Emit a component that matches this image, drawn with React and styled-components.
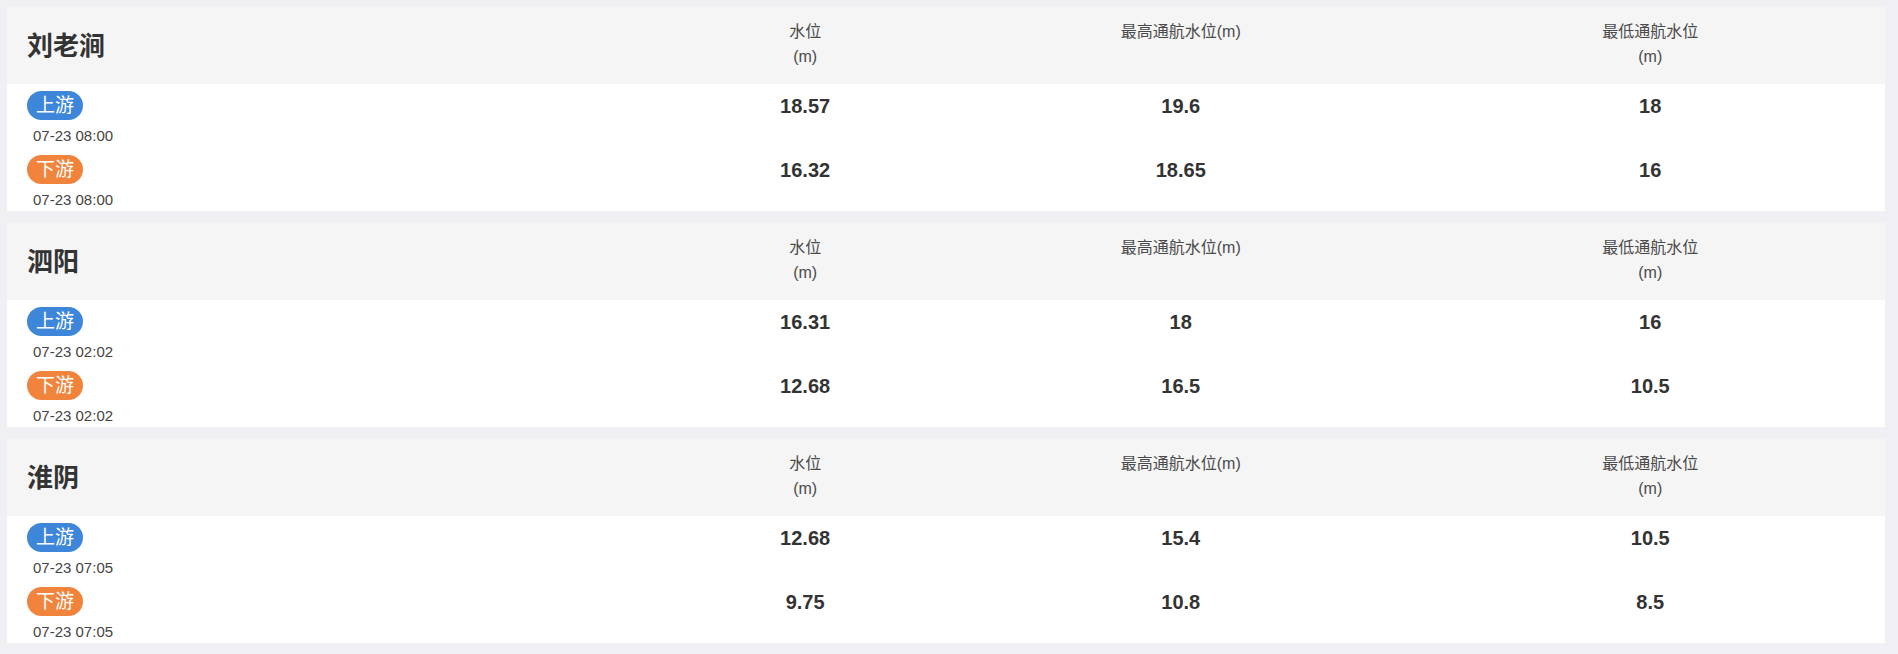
import React from "react";
import styled, { createGlobalStyle } from "styled-components";

const GlobalStyle = createGlobalStyle`
  html, body {
    margin: 0;
    padding: 0;
    background: #efeff4;
    font-family: "Liberation Sans", "Noto Sans CJK SC", sans-serif;
    color: #333;
  }
`;

const Page = styled.div`
  display: flex;
  flex-direction: column;
  gap: 12px;
  padding: 7px 13px 11px 7px;
`;

const Card = styled.section`
  background: #fff;
`;

const Grid = styled.div`
  display: grid;
  grid-template-columns: 35% 15% 25% 25%;
`;

const Header = styled(Grid)`
  background: #f5f5f6;
  height: 77px;
  box-sizing: border-box;
`;

const Title = styled.h2`
  margin: 0;
  align-self: center;
  padding-left: 20px;
  font-size: 26px;
  font-weight: bold;
  color: #333;
  line-height: 1;
`;

const ColHead = styled.div`
  align-self: start;
  padding-top: 12px;
  text-align: center;
  font-size: 16px;
  line-height: 25px;
  color: #4a4a4a;
`;

const Body = styled.div`
  display: flex;
  flex-direction: column;
  gap: 8px;
  padding: 7px 0 0;
`;

const Row = styled(Grid)``;

const Label = styled.div`
  display: flex;
  flex-direction: column;
  align-items: flex-start;
  padding-left: 20px;
`;

const Badge = styled.span`
  display: inline-block;
  height: 29px;
  line-height: 29px;
  padding: 0 9px;
  border-radius: 15px;
  font-size: 19px;
  color: #fff;
  background: ${(p) => (p.$down ? "#f0843c" : "#3d86d9")};
`;

const Time = styled.div`
  padding: 5px 0 0 6px;
  font-size: 15px;
  line-height: 22px;
  color: #444;
`;

const Value = styled.div`
  text-align: center;
  font-size: 20px;
  font-weight: bold;
  line-height: 31px;
  color: #333;
`;

const data = [
  {
    name: "刘老涧",
    rows: [
      { type: "上游", time: "07-23 08:00", v: ["18.57", "19.6", "18"] },
      { type: "下游", time: "07-23 08:00", v: ["16.32", "18.65", "16"] },
    ],
  },
  {
    name: "泗阳",
    rows: [
      { type: "上游", time: "07-23 02:02", v: ["16.31", "18", "16"] },
      { type: "下游", time: "07-23 02:02", v: ["12.68", "16.5", "10.5"] },
    ],
  },
  {
    name: "淮阴",
    rows: [
      { type: "上游", time: "07-23 07:05", v: ["12.68", "15.4", "10.5"] },
      { type: "下游", time: "07-23 07:05", v: ["9.75", "10.8", "8.5"] },
    ],
  },
];

export default function App() {
  return (
    <>
      <GlobalStyle />
      <Page>
        {data.map((s) => (
          <Card key={s.name}>
            <Header>
              <Title>{s.name}</Title>
              <ColHead>
                水位
                <br />
                (m)
              </ColHead>
              <ColHead>最高通航水位(m)</ColHead>
              <ColHead>
                最低通航水位
                <br />
                (m)
              </ColHead>
            </Header>
            <Body>
              {s.rows.map((r) => (
                <Row key={r.type}>
                  <Label>
                    <Badge $down={r.type === "下游"}>{r.type}</Badge>
                    <Time>{r.time}</Time>
                  </Label>
                  {r.v.map((x, i) => (
                    <Value key={i}>{x}</Value>
                  ))}
                </Row>
              ))}
            </Body>
          </Card>
        ))}
      </Page>
    </>
  );
}
